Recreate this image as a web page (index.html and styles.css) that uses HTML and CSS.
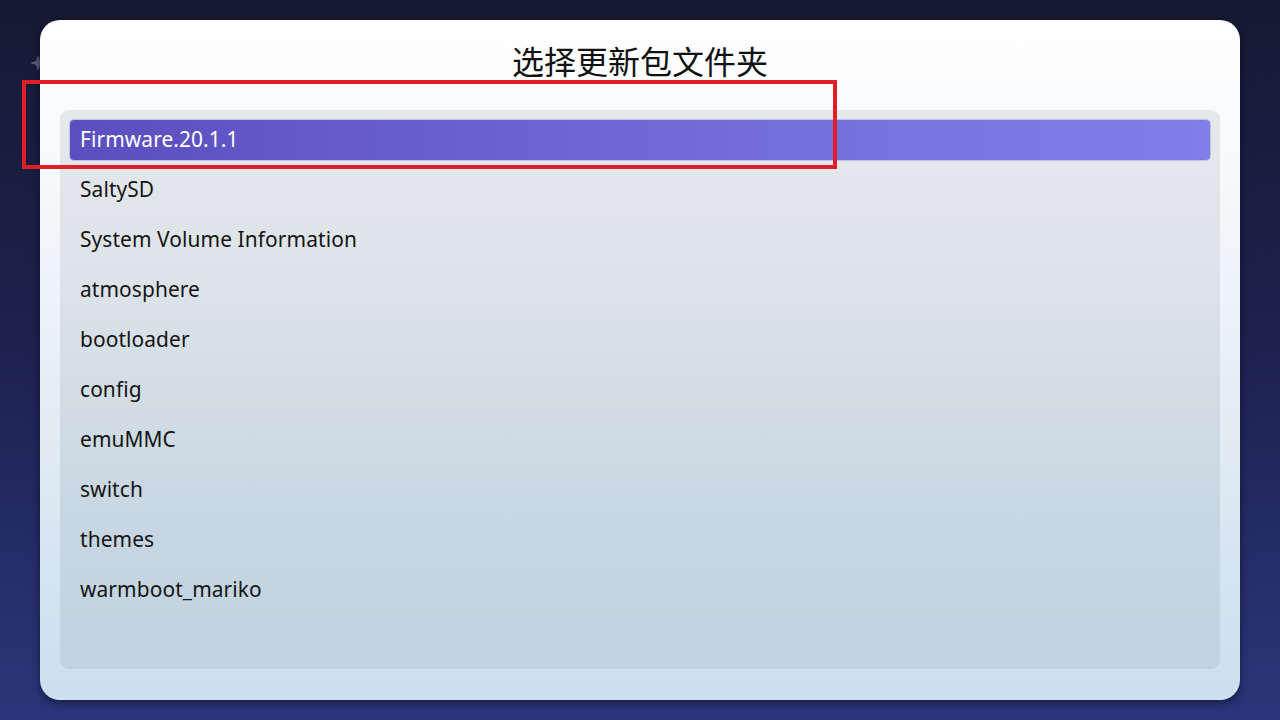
FILE: index.html
```html
<!DOCTYPE html>
<html lang="zh-CN">
<head>
<meta charset="utf-8">
<title>选择更新包文件夹</title>
<link rel="stylesheet" href="styles.css">
</head>
<body>
<div class="screen">
  <svg class="sparkle" width="16" height="16" viewBox="0 0 16 16"><path d="M8 0 L10 6 L16 8 L10 10 L8 16 L6 10 L0 8 L6 6 Z" fill="#565d80"/></svg>
  <div class="panel">
    <h1 class="title">选择更新包文件夹</h1>
    <div class="list">
      <div class="row selected"><span>Firmware.20.1.1</span></div>
      <div class="row"><span>SaltySD</span></div>
      <div class="row"><span>System Volume Information</span></div>
      <div class="row"><span>atmosphere</span></div>
      <div class="row"><span>bootloader</span></div>
      <div class="row"><span>config</span></div>
      <div class="row"><span>emuMMC</span></div>
      <div class="row"><span>switch</span></div>
      <div class="row"><span>themes</span></div>
      <div class="row"><span>warmboot_mariko</span></div>
    </div>
  </div>
  <div class="annotation"></div>
</div>
</body>
</html>
```

FILE: styles.css
```css
html, body {
  margin: 0;
  padding: 0;
}
body {
  width: 1280px;
  height: 720px;
  overflow: hidden;
  font-family: "Noto Sans", "Noto Sans CJK SC", sans-serif;
}
.screen {
  position: relative;
  width: 1280px;
  height: 720px;
  box-sizing: border-box;
  padding: 20px 40px;
  background: linear-gradient(180deg, #151a33 0%, #1d2250 50%, #2d357b 100%);
}
.sparkle {
  position: absolute;
  left: 30px;
  top: 55px;
}
.panel {
  position: relative;
  height: 680px;
  box-sizing: border-box;
  border-radius: 20px;
  background: linear-gradient(180deg, #ffffff 0%, #f3f6f9 30%, #d9e6f1 75%, #cbdfef 100%);
  box-shadow: 0 3px 8px rgba(5, 8, 30, 0.55);
  padding: 20px 20px 31px;
  display: flex;
  flex-direction: column;
}
.title {
  margin: 0;
  height: 70px;
  line-height: 41px;
  text-align: center;
  font-family: "Noto Sans CJK SC", sans-serif;
  font-weight: 400;
  font-size: 32px;
  color: #111111;
}
.list {
  flex: 1;
  border-radius: 9px;
  background: linear-gradient(180deg, #e6e8eb 0%, #dde3e9 30%, #c7d6e2 75%, #c0d3e1 100%);
  padding: 5px 10px;
  display: flex;
  flex-direction: column;
}
.row {
  height: 50px;
  display: flex;
  align-items: center;
}
.row span {
  display: flex;
  align-items: center;
  height: 40px;
  flex: 1;
  box-sizing: border-box;
  padding: 0 10px 2px;
  font-size: 20.9px;
  color: #141414;
  letter-spacing: 0.1px;
}
.row.selected span {
  border-radius: 4px;
  color: #ffffff;
  background: linear-gradient(90deg, #5b4ebf 0%, #6b63d2 40%, #7a78e0 80%, #817fe7 100%);
  box-shadow: 0 0 0 1px rgba(170, 170, 220, 0.6);
}
.annotation {
  position: absolute;
  left: 22px;
  top: 80px;
  width: 815px;
  height: 89px;
  box-sizing: border-box;
  border: 4.5px solid #e11d27;
}
```
